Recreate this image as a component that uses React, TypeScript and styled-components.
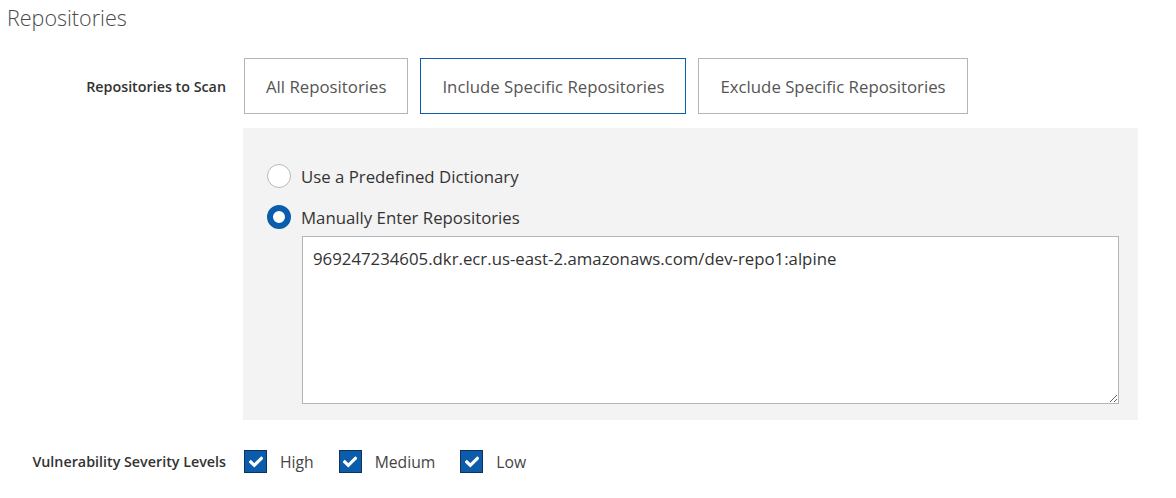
import React, { useState } from "react";
import styled, { createGlobalStyle, css } from "styled-components";

const Global = createGlobalStyle`
  html, body { margin: 0; padding: 0; background: #fff; }
  body { font-family: "Open Sans", "Noto Sans", sans-serif; color: #333; }
`;

const Page = styled.div`
  width: 1176px;
  height: 498px;
  box-sizing: border-box;
  padding: 0 0 0 7px;
  overflow: hidden;
`;

const Title = styled.h2`
  margin: 0;
  padding-top: 3px;
  height: 58px;
  box-sizing: border-box;
  font-size: 21.5px;
  font-weight: 300;
  line-height: 30px;
  color: #4a4a4a;
`;

const FormRow = styled.div<{ $top?: number }>`
  display: grid;
  grid-template-columns: 219px 1fr;
  column-gap: 18px;
  align-items: center;
  margin-top: ${(p) => p.$top ?? 0}px;
`;

const Label = styled.div`
  text-align: right;
  font-size: 14.3px;
  font-weight: 600;
  color: #333;
`;

const Segments = styled.div`
  display: flex;
  gap: 12px;
`;

const Segment = styled.button<{ $active?: boolean }>`
  height: 56px;
  padding: 0 21px;
  background: #fff;
  border: 1px solid #b5b5b5;
  font-family: "Open Sans", sans-serif;
  font-size: 16.8px;
  color: #555;
  cursor: pointer;
  ${(p) =>
    p.$active &&
    css`
      border-color: #0b5cab;
    `}
`;

const Panel = styled.div`
  margin: 14px 0 0 236px;
  width: 895px;
  height: 292px;
  box-sizing: border-box;
  background: #f3f3f3;
  padding: 36px 19px 16px 24px;
  display: flex;
  flex-direction: column;
`;

const RadioRow = styled.label`
  display: flex;
  align-items: center;
  gap: 10px;
  font-size: 16.8px;
  color: #333;
  height: 24px;
  margin-bottom: 17px;
  cursor: pointer;
`;

const RadioDot = styled.span<{ $checked?: boolean }>`
  width: 24px;
  height: 24px;
  box-sizing: border-box;
  border-radius: 50%;
  background: #fff;
  border: 1px solid #b8b8b8;
  flex: none;
  ${(p) =>
    p.$checked &&
    css`
      border: 6px solid #0b5cab;
    `}
`;

const TextArea = styled.textarea`
  margin: -10px 0 0 35px;
  flex: 1;
  resize: vertical;
  box-sizing: border-box;
  border: 1px solid #b0b5bb;
  background: #fff;
  padding: 10px 10px;
  font-family: "Open Sans", sans-serif;
  font-size: 16.8px;
  line-height: 24px;
  color: #333;
  outline: none;
`;

const Checks = styled.div`
  display: flex;
  align-items: center;
`;

const CheckItem = styled.label`
  display: flex;
  align-items: center;
  font-size: 15.7px;
  color: #444;
  margin-right: 25px;
  cursor: pointer;
`;

const Box = styled.span`
  width: 23px;
  height: 23px;
  box-sizing: border-box;
  background: #0b5cab;
  border: 1px solid #12325a;
  display: flex;
  align-items: center;
  justify-content: center;
  margin-right: 13px;
`;

const Check = () => (
  <svg width="14" height="12" viewBox="0 0 14 12">
    <path d="M1.8 6 L5.3 9.3 L12.3 2.4" fill="none" stroke="#fff" strokeWidth="3.2" strokeLinecap="square" />
  </svg>
);

export default function App() {
  const [mode, setMode] = useState(1);
  const [src, setSrc] = useState(1);
  const opts = ["All Repositories", "Include Specific Repositories", "Exclude Specific Repositories"];
  return (
    <Page>
      <Global />
      <Title>Repositories</Title>
      <FormRow>
        <Label>Repositories to Scan</Label>
        <Segments>
          {opts.map((o, i) => (
            <Segment key={o} $active={mode === i} onClick={() => setMode(i)}>
              {o}
            </Segment>
          ))}
        </Segments>
      </FormRow>
      <Panel>
        <RadioRow onClick={() => setSrc(0)}>
          <RadioDot $checked={src === 0} />
          Use a Predefined Dictionary
        </RadioRow>
        <RadioRow onClick={() => setSrc(1)}>
          <RadioDot $checked={src === 1} />
          Manually Enter Repositories
        </RadioRow>
        <TextArea defaultValue="969247234605.dkr.ecr.us-east-2.amazonaws.com/dev-repo1:alpine" />
      </Panel>
      <FormRow $top={30}>
        <Label>Vulnerability Severity Levels</Label>
        <Checks>
          <CheckItem>
            <Box><Check /></Box>High
          </CheckItem>
          <CheckItem>
            <Box><Check /></Box>Medium
          </CheckItem>
          <CheckItem>
            <Box><Check /></Box>Low
          </CheckItem>
        </Checks>
      </FormRow>
    </Page>
  );
}
